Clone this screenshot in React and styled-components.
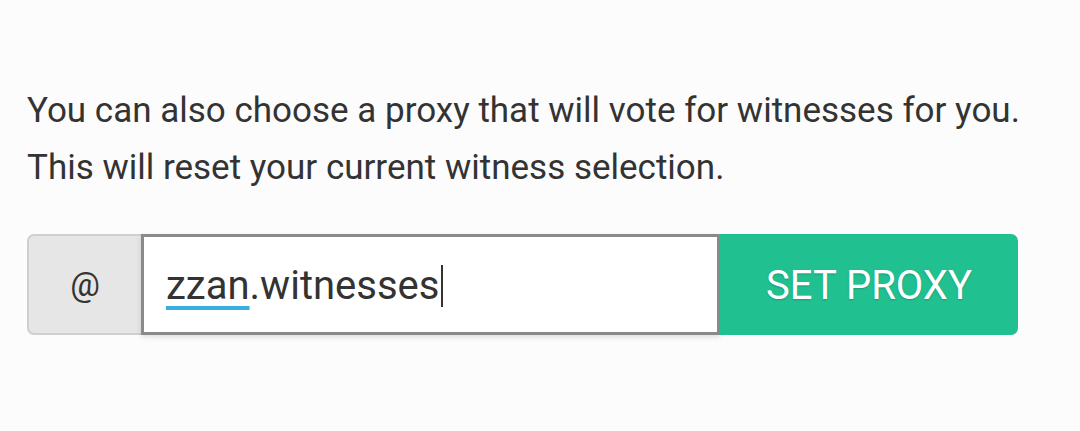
import styled, { createGlobalStyle } from "styled-components";

const GlobalStyle = createGlobalStyle`
  html, body {
    margin: 0;
    padding: 0;
    background: #fcfcfc;
    font-family: Roboto, "Liberation Sans", sans-serif;
  }
`;

const Page = styled.div`
  padding: 82px 27px 0 27px;
  width: 1080px;
  height: 431px;
  box-sizing: border-box;
`;

const Intro = styled.p`
  margin: 0;
  font-size: 35px;
  line-height: 57px;
  color: #333;
  white-space: nowrap;
`;

const InputGroup = styled.div`
  display: flex;
  margin-top: 38px;
  width: 991px;
  height: 101px;
`;

const Addon = styled.div`
  display: flex;
  align-items: center;
  justify-content: center;
  width: 114px;
  box-sizing: border-box;
  background: #e6e6e6;
  border: 2px solid #cfcfcf;
  border-right: none;
  border-radius: 7px 0 0 7px;
  font-size: 33px;
  color: #333;
`;

const Field = styled.div`
  display: flex;
  align-items: center;
  flex: 1;
  box-sizing: border-box;
  padding: 2px 0 0 22px;
  background: #fff;
  border: 3px solid #8a8a8a;
  box-shadow: 0 2px 5px rgba(0, 0, 0, 0.12);
  font-size: 40px;
  color: #333;
`;

const Composing = styled.span`
  text-decoration: underline;
  text-decoration-color: #3aaee0;
  text-decoration-thickness: 4px;
  text-underline-offset: 7px;
`;

const Caret = styled.span`
  display: inline-block;
  width: 2px;
  height: 42px;
  margin-left: 2px;
  background: #333;
`;

const Button = styled.button`
  width: 298px;
  box-sizing: border-box;
  padding: 2px 0 0;
  border: none;
  border-radius: 0 7px 7px 0;
  background: #21c090;
  color: #fff;
  font-family: inherit;
  font-size: 40px;
  text-transform: uppercase;
  text-shadow: 0 1px 2px rgba(0, 0, 0, 0.2);
  cursor: pointer;
`;

export default function App() {
  return (
    <>
      <GlobalStyle />
      <Page>
        <Intro>
          You can also choose a proxy that will vote for witnesses for you.
          <br />
          This will reset your current witness selection.
        </Intro>
        <InputGroup>
          <Addon>@</Addon>
          <Field>
            <span>
              <Composing>zzan</Composing>.witnesses
            </span>
            <Caret />
          </Field>
          <Button>Set Proxy</Button>
        </InputGroup>
      </Page>
    </>
  );
}
